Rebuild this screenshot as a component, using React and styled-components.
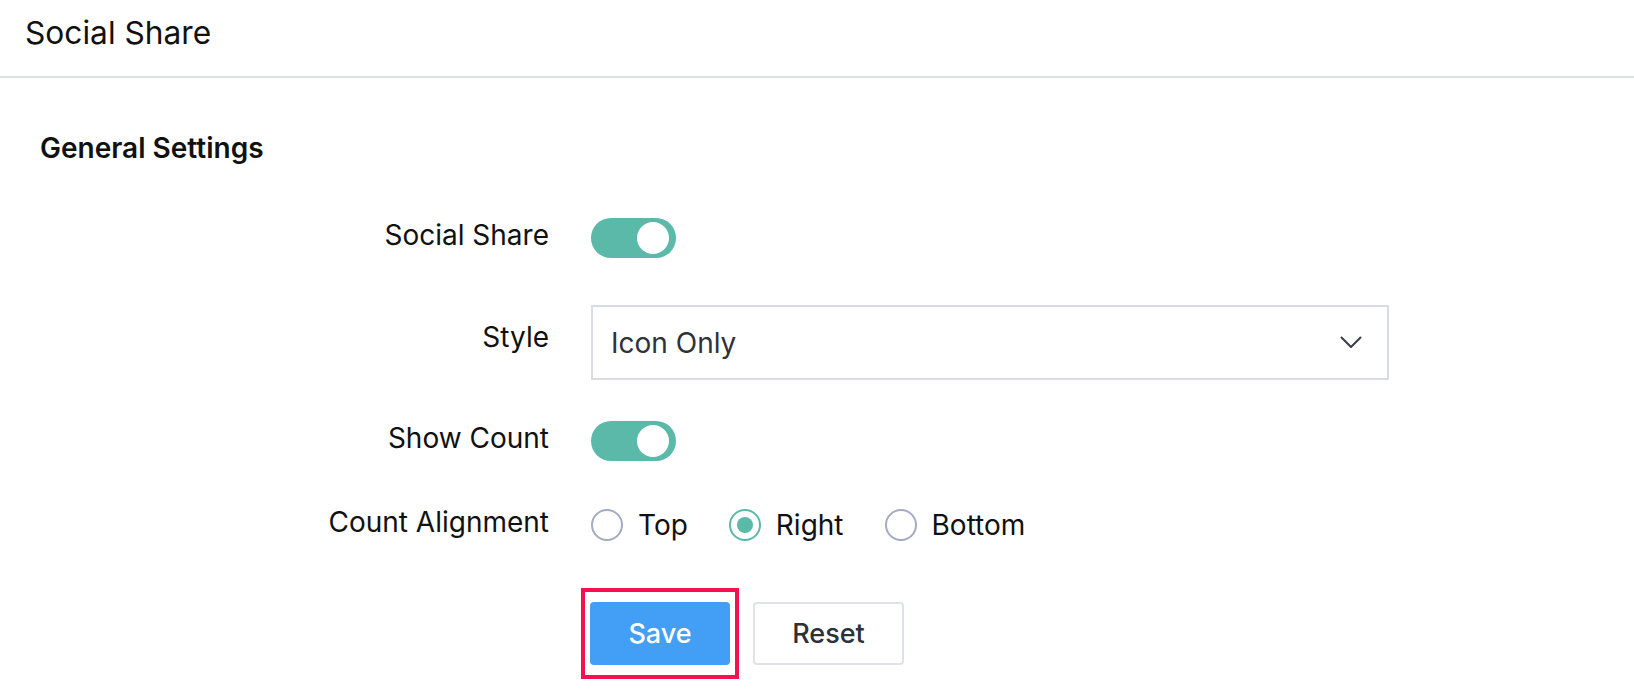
import React, { useState } from "react";
import styled, { createGlobalStyle } from "styled-components";

const GlobalStyle = createGlobalStyle`
  html, body {
    margin: 0;
    padding: 0;
    background: #ffffff;
    font-family: "Inter", "Liberation Sans", sans-serif;
    color: #111111;
  }
  * {
    box-sizing: border-box;
  }
`;

function App() {
  const [share, setShare] = useState(true);
  const [count, setCount] = useState(true);
  const [align, setAlign] = useState("right");

  return (
    <Page>
      <GlobalStyle />
      <Header>
        <HeaderTitle>Social Share</HeaderTitle>
      </Header>
      <Content>
        <SectionTitle>General Settings</SectionTitle>
        <Form>
          <Label>Social Share</Label>
          <Control>
            <Toggle $on={share} onClick={() => setShare(!share)}>
              <Knob $on={share} />
            </Toggle>
          </Control>

          <Label>Style</Label>
          <Control>
            <Select>
              <SelectText>Icon Only</SelectText>
              <svg width="22" height="13" viewBox="0 0 22 13" fill="none">
                <path d="M1.5 1.5 L11 11 L20.5 1.5" stroke="#3a3d45" strokeWidth="2" strokeLinecap="round" strokeLinejoin="round" />
              </svg>
            </Select>
          </Control>

          <Label>Show Count</Label>
          <Control>
            <Toggle $on={count} onClick={() => setCount(!count)}>
              <Knob $on={count} />
            </Toggle>
          </Control>

          <Label>Count Alignment</Label>
          <Control>
            <RadioGroup>
              {["Top", "Right", "Bottom"].map((opt) => (
                <RadioOption key={opt} onClick={() => setAlign(opt.toLowerCase())}>
                  <RadioCircle $checked={align === opt.toLowerCase()} />
                  {opt}
                </RadioOption>
              ))}
            </RadioGroup>
          </Control>
        </Form>
        <Actions>
          <FocusRing>
            <SaveButton>Save</SaveButton>
          </FocusRing>
          <ResetButton>Reset</ResetButton>
        </Actions>
      </Content>
    </Page>
  );
}

const Page = styled.div`
  width: 100%;
  min-height: 698px;
`;

const Header = styled.div`
  height: 78px;
  padding: 0 25px;
  display: flex;
  align-items: center;
  border-bottom: 2px solid #dde1e6;
`;

const HeaderTitle = styled.h1`
  margin: 0 0 12px 0;
  font-size: 31.7px;
  font-weight: 400;
  color: #111111;
`;

const Content = styled.div`
  padding: 53px 40px 0 40px;
`;

const SectionTitle = styled.h2`
  margin: 0;
  font-size: 28px;
  line-height: 34px;
  font-weight: 600;
  color: #111111;
`;

const Form = styled.div`
  display: grid;
  grid-template-columns: 509px 798px;
  column-gap: 42px;
  row-gap: 44px;
  margin-top: 53px;
  align-items: center;
`;

const Label = styled.div`
  text-align: right;
  font-size: 28px;
  line-height: 34px;
  color: #111111;
  margin-top: -6px;
`;

const Control = styled.div`
  display: flex;
  align-items: center;
`;

const Toggle = styled.div`
  position: relative;
  width: 85px;
  height: 40px;
  border-radius: 20px;
  background: ${(p) => (p.$on ? "#5ab9a8" : "#c9ced8")};
  cursor: pointer;
`;

const Knob = styled.span`
  position: absolute;
  top: 4px;
  left: ${(p) => (p.$on ? "46px" : "6px")};
  width: 32px;
  height: 32px;
  border-radius: 50%;
  background: #ffffff;
`;

const Select = styled.div`
  width: 798px;
  height: 75px;
  margin: 3px 0 -3px 0;
  border: 2px solid #d9dce5;
  padding: 0 25px 0 18px;
  display: flex;
  align-items: center;
  justify-content: space-between;
`;

const SelectText = styled.span`
  font-size: 28px;
  color: #2e3138;
`;

const RadioGroup = styled.div`
  display: flex;
  align-items: center;
  gap: 41px;
  height: 38px;
  margin-top: 1px;
`;

const RadioOption = styled.label`
  display: flex;
  align-items: center;
  gap: 15px;
  font-size: 28px;
  color: #111111;
  cursor: pointer;
`;

const RadioCircle = styled.span`
  width: 32px;
  height: 32px;
  border-radius: 50%;
  border: 2px solid ${(p) => (p.$checked ? "#5ab9a8" : "#a4abc2")};
  display: flex;
  align-items: center;
  justify-content: center;
  &::after {
    content: "";
    width: 16px;
    height: 16px;
    border-radius: 50%;
    background: #5ab9a8;
    display: ${(p) => (p.$checked ? "block" : "none")};
  }
`;

const Actions = styled.div`
  display: flex;
  align-items: center;
  gap: 14px;
  margin-top: 44px;
  margin-left: 541px;
`;

const FocusRing = styled.div`
  border: 4px solid #f5114f;
  padding: 10px 5px 10px 5px;
`;

const SaveButton = styled.button`
  width: 140px;
  height: 63px;
  border: none;
  border-radius: 4px;
  background: #439ef5;
  color: #ffffff;
  font-family: inherit;
  font-size: 27px;
  font-weight: 500;
  cursor: pointer;
`;

const ResetButton = styled.button`
  width: 151px;
  height: 63px;
  border: 2px solid #dfe3e8;
  border-radius: 4px;
  background: #ffffff;
  color: #2d3039;
  font-family: inherit;
  font-size: 27px;
  font-weight: 500;
  cursor: pointer;
`;

export default App;
